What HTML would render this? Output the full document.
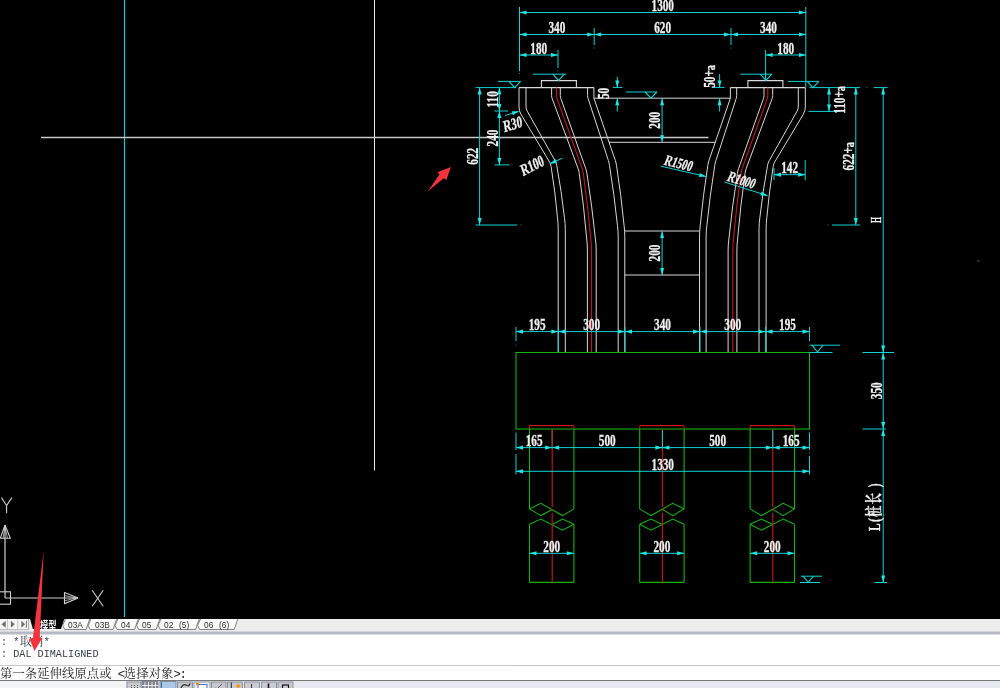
<!DOCTYPE html>
<html><head><meta charset="utf-8"><title>AutoCAD</title>
<style>
html,body{margin:0;padding:0;}
body{width:1000px;height:688px;overflow:hidden;position:relative;background:#000;font-family:"Liberation Sans","Noto Sans CJK SC",sans-serif;}
#draw{position:absolute;left:0;top:0;width:1000px;height:618px;background:#000;overflow:hidden;}
#tabs{will-change:transform;opacity:0.999;position:absolute;left:0;top:618px;width:1000px;height:14px;background:#eeeeee;}
#tabs .sep{position:absolute;left:0;top:13.2px;width:1000px;height:3.6px;background:linear-gradient(#e4e4e8,#a9adb9 50%,#ececf0);}
#hist{will-change:transform;opacity:0.999;position:absolute;left:0;top:634.5px;width:1000px;height:31px;background:#fff;}
#hist div{position:absolute;left:0.5px;white-space:pre;font-family:"Liberation Mono","Noto Serif CJK SC",monospace;font-size:11.4px;color:#3a3d44;line-height:14px;transform:scaleX(0.8918);transform-origin:0 0;}
#hist div b{font-weight:normal;display:inline-block;font-size:12px;line-height:14px;transform:scaleX(1.14);transform-origin:0 0;width:13.68px;vertical-align:top;position:relative;top:0.8px;}
#hsep{position:absolute;left:0;top:665.3px;width:1000px;height:1.4px;background:#c8c8c8;}
#cmd{will-change:transform;opacity:0.999;position:absolute;left:0;top:666.4px;width:1000px;height:13.6px;background:#fff;}
#cmd span{position:absolute;left:0;top:1px;letter-spacing:0.1px;white-space:pre;font-family:"Liberation Mono","Noto Serif CJK SC",serif;font-size:12.3px;line-height:16px;color:#222;}
#cmd i{display:inline-block;width:6.15px;font-style:normal;text-align:center;overflow:visible;}
#status{position:absolute;left:0;top:680px;width:1000px;height:8px;background:#e6e9f0;border-top:1px solid #777;box-sizing:border-box;}
.tab{position:absolute;top:1.0px;font-size:9.7px;line-height:12px;color:#2c2c2c;white-space:pre;font-family:"Liberation Sans","Noto Sans CJK SC",sans-serif;transform:scaleX(0.86);transform-origin:0 0;}
</style></head><body>
<div id="draw"><svg width="1000" height="618" viewBox="0 0 1000 618" style="position:absolute;left:0;top:0;will-change:transform;opacity:0.999"><line x1="124.5" y1="0" x2="124.5" y2="618" stroke="#12c8c8" stroke-width="1.25" />
<line x1="374.5" y1="0" x2="374.5" y2="470.5" stroke="#e8e8e8" stroke-width="1" />
<line x1="41" y1="137.4" x2="708.5" y2="137.4" stroke="#c8c8c8" stroke-width="1.5" />
<rect x="519.0" y="73.0" width="1" height="1" fill="#0c8c8c"/>
<rect x="593.7" y="47.5" width="1" height="1" fill="#0c8c8c"/>
<rect x="730.5" y="47.5" width="1" height="1" fill="#0c8c8c"/>
<rect x="557.5" y="70.5" width="1" height="1" fill="#0c8c8c"/>
<rect x="520.5" y="224.5" width="1" height="1" fill="#0c8c8c"/>
<rect x="511.5" y="164.4" width="1" height="1" fill="#0c8c8c"/>
<rect x="827.5" y="224.5" width="1" height="1" fill="#0c8c8c"/>
<rect x="866.5" y="87.1" width="1" height="1" fill="#0c8c8c"/>
<rect x="515.5" y="344.5" width="1" height="1" fill="#0c8c8c"/>
<rect x="809.0" y="452.5" width="1" height="1" fill="#0c8c8c"/>
<line x1="519.5" y1="7" x2="519.5" y2="71" stroke="#0fd6d6" stroke-width="1" />
<line x1="805.8" y1="7" x2="805.8" y2="87" stroke="#0fd6d6" stroke-width="1" />
<line x1="594.2" y1="28" x2="594.2" y2="45" stroke="#0fd6d6" stroke-width="1" />
<line x1="731" y1="28" x2="731" y2="45" stroke="#0fd6d6" stroke-width="1" />
<line x1="558" y1="50" x2="558" y2="68" stroke="#0fd6d6" stroke-width="1" />
<line x1="765.6" y1="50" x2="765.6" y2="80" stroke="#0fd6d6" stroke-width="1" />
<line x1="519.5" y1="12.5" x2="806" y2="12.5" stroke="#0fd6d6" stroke-width="1" />
<polygon points="519.5,12.5 526.5,10.4 526.5,14.6" fill="#1ee8e8"/>
<polygon points="806.0,12.5 799.0,14.6 799.0,10.4" fill="#1ee8e8"/>
<text transform="translate(662.75,11.2) scale(0.69,1)" text-anchor="middle" font-family="'Liberation Serif','Noto Serif CJK SC',serif" font-weight="bold" font-size="16.3" fill="#f2f2f2" stroke="#f2f2f2" stroke-width="0.3">1300</text>
<line x1="519.5" y1="34.5" x2="594.2" y2="34.5" stroke="#0fd6d6" stroke-width="1" />
<polygon points="519.5,34.5 526.5,32.5 526.5,36.5" fill="#1ee8e8"/>
<polygon points="594.2,34.5 587.2,36.5 587.2,32.5" fill="#1ee8e8"/>
<text transform="translate(556.85,33.2) scale(0.69,1)" text-anchor="middle" font-family="'Liberation Serif','Noto Serif CJK SC',serif" font-weight="bold" font-size="16.3" fill="#f2f2f2" stroke="#f2f2f2" stroke-width="0.3">340</text>
<line x1="594.2" y1="34.5" x2="731" y2="34.5" stroke="#0fd6d6" stroke-width="1" />
<polygon points="594.2,34.5 601.2,32.5 601.2,36.5" fill="#1ee8e8"/>
<polygon points="731.0,34.5 724.0,36.5 724.0,32.5" fill="#1ee8e8"/>
<text transform="translate(662.6,33.2) scale(0.69,1)" text-anchor="middle" font-family="'Liberation Serif','Noto Serif CJK SC',serif" font-weight="bold" font-size="16.3" fill="#f2f2f2" stroke="#f2f2f2" stroke-width="0.3">620</text>
<line x1="731" y1="34.5" x2="806" y2="34.5" stroke="#0fd6d6" stroke-width="1" />
<polygon points="731.0,34.5 738.0,32.5 738.0,36.5" fill="#1ee8e8"/>
<polygon points="806.0,34.5 799.0,36.5 799.0,32.5" fill="#1ee8e8"/>
<text transform="translate(768.5,33.2) scale(0.69,1)" text-anchor="middle" font-family="'Liberation Serif','Noto Serif CJK SC',serif" font-weight="bold" font-size="16.3" fill="#f2f2f2" stroke="#f2f2f2" stroke-width="0.3">340</text>
<line x1="519.5" y1="55" x2="558" y2="55" stroke="#0fd6d6" stroke-width="1" />
<polygon points="519.5,55.0 526.5,53.0 526.5,57.0" fill="#1ee8e8"/>
<polygon points="558.0,55.0 551.0,57.0 551.0,53.0" fill="#1ee8e8"/>
<text transform="translate(538.75,53.7) scale(0.69,1)" text-anchor="middle" font-family="'Liberation Serif','Noto Serif CJK SC',serif" font-weight="bold" font-size="16.3" fill="#f2f2f2" stroke="#f2f2f2" stroke-width="0.3">180</text>
<line x1="765.6" y1="55" x2="806" y2="55" stroke="#0fd6d6" stroke-width="1" />
<polygon points="765.6,55.0 772.6,53.0 772.6,57.0" fill="#1ee8e8"/>
<polygon points="806.0,55.0 799.0,57.0 799.0,53.0" fill="#1ee8e8"/>
<text transform="translate(785.8,53.7) scale(0.69,1)" text-anchor="middle" font-family="'Liberation Serif','Noto Serif CJK SC',serif" font-weight="bold" font-size="16.3" fill="#f2f2f2" stroke="#f2f2f2" stroke-width="0.3">180</text>
<path d="M519.00,87.6 L519.00,107.00 Q519.00,111.00 521.06,114.43 L549.51,161.86 Q550.80,164.00 551.11,166.48 Q555.18,191.80 557.46,217.35 Q558.20,223.30 558.20,229.30 L558.20,352.5" fill="none" stroke="#dadada" stroke-width="1"/>
<path d="M526.00,87.6 L526.00,106.50 Q526.00,109.00 527.23,111.18 L555.17,160.82 Q556.40,163.00 556.77,165.47 Q561.48,191.29 564.42,217.36 Q565.30,223.30 565.30,229.30 L565.30,352.5" fill="none" stroke="#dadada" stroke-width="1"/>
<path d="M551.60,87.6 L551.60,95.50 Q551.60,97.00 552.12,98.41 L578.13,168.66 Q579.00,171.00 579.28,173.48 Q583.90,206.16 586.72,239.04 Q587.40,245.00 587.40,251.00 L587.40,352.5" fill="none" stroke="#dadada" stroke-width="1"/>
<path d="M560.30,87.6 L560.30,95.50 Q560.30,97.00 560.80,98.41 L585.76,168.64 Q586.60,171.00 586.92,173.48 Q592.07,206.15 595.43,239.05 Q596.20,245.00 596.20,251.00 L596.20,352.5" fill="none" stroke="#dadada" stroke-width="1"/>
<path d="M587.60,87.6 L587.60,95.50 Q587.60,97.00 588.07,98.43 L608.42,160.62 Q609.20,163.00 609.53,165.48 Q614.36,195.25 617.42,225.25 Q618.20,231.20 618.20,237.20 L618.20,352.5" fill="none" stroke="#dadada" stroke-width="1"/>
<path d="M593.90,87.6 L593.90,97.20 Q593.90,98.20 594.23,99.15 L615.39,160.64 Q616.20,163.00 616.51,165.48 Q621.17,195.25 624.05,225.25 Q624.80,231.20 624.80,237.20 L624.80,352.5" fill="none" stroke="#dadada" stroke-width="1"/>
<polyline points="519,87.6 593.9,87.6" fill="none" stroke="#dadada" stroke-width="1.1" />
<polyline points="541.4,87.6 541.4,80.6 576.4,80.6 576.4,87.6" fill="none" stroke="#dadada" stroke-width="1.1" />
<path d="M556.50,87.6 L556.50,95.50 Q556.50,97.00 557.01,98.41 L582.16,168.65 Q583.00,171.00 583.29,173.48 Q587.94,206.16 590.82,239.04 Q591.50,245.00 591.50,251.00 L591.50,352.5" fill="none" stroke="#c81616" stroke-width="1.15"/>
<path d="M805.30,87.6 L805.30,107.00 Q805.30,111.00 803.24,114.43 L774.79,161.86 Q773.50,164.00 773.19,166.48 Q769.12,191.80 766.84,217.35 Q766.10,223.30 766.10,229.30 L766.10,352.5" fill="none" stroke="#dadada" stroke-width="1"/>
<path d="M798.30,87.6 L798.30,106.50 Q798.30,109.00 797.07,111.18 L769.13,160.82 Q767.90,163.00 767.53,165.47 Q762.82,191.29 759.88,217.36 Q759.00,223.30 759.00,229.30 L759.00,352.5" fill="none" stroke="#dadada" stroke-width="1"/>
<path d="M772.70,87.6 L772.70,95.50 Q772.70,97.00 772.18,98.41 L746.17,168.66 Q745.30,171.00 745.02,173.48 Q740.40,206.16 737.58,239.04 Q736.90,245.00 736.90,251.00 L736.90,352.5" fill="none" stroke="#dadada" stroke-width="1"/>
<path d="M764.00,87.6 L764.00,95.50 Q764.00,97.00 763.50,98.41 L738.54,168.64 Q737.70,171.00 737.38,173.48 Q732.23,206.15 728.87,239.05 Q728.10,245.00 728.10,251.00 L728.10,352.5" fill="none" stroke="#dadada" stroke-width="1"/>
<path d="M736.70,87.6 L736.70,95.50 Q736.70,97.00 736.23,98.43 L715.88,160.62 Q715.10,163.00 714.77,165.48 Q709.94,195.25 706.88,225.25 Q706.10,231.20 706.10,237.20 L706.10,352.5" fill="none" stroke="#dadada" stroke-width="1"/>
<path d="M730.40,87.6 L730.40,97.20 Q730.40,98.20 730.07,99.15 L708.91,160.64 Q708.10,163.00 707.79,165.48 Q703.13,195.25 700.25,225.25 Q699.50,231.20 699.50,237.20 L699.50,352.5" fill="none" stroke="#dadada" stroke-width="1"/>
<polyline points="805.3,87.6 730.4,87.6" fill="none" stroke="#dadada" stroke-width="1.1" />
<polyline points="782.9,87.6 782.9,80.6 747.9,80.6 747.9,87.6" fill="none" stroke="#dadada" stroke-width="1.1" />
<path d="M767.80,87.6 L767.80,95.50 Q767.80,97.00 767.29,98.41 L742.14,168.65 Q741.30,171.00 741.01,173.48 Q736.36,206.16 733.48,239.04 Q732.80,245.00 732.80,251.00 L732.80,352.5" fill="none" stroke="#c81616" stroke-width="1.15"/>
<line x1="593.9" y1="98.2" x2="730.7" y2="98.2" stroke="#dadada" stroke-width="1" />
<line x1="608.9" y1="142.3" x2="715.7" y2="142.3" stroke="#dadada" stroke-width="1" />
<line x1="624.8" y1="231" x2="699.6" y2="231" stroke="#dadada" stroke-width="1" />
<line x1="624.8" y1="275" x2="699.6" y2="275" stroke="#dadada" stroke-width="1" />
<line x1="498" y1="81.39999999999999" x2="520.5" y2="81.39999999999999" stroke="#0fd6d6" stroke-width="1" />
<polyline points="508.99999999999994,81.39999999999999 514.8,87.6 520.5999999999999,81.39999999999999" fill="none" stroke="#0fd6d6" stroke-width="1.1" />
<line x1="533" y1="74.2" x2="566" y2="74.2" stroke="#0fd6d6" stroke-width="1" />
<polyline points="552.8000000000001,74.2 558.6,80.4 564.4,74.2" fill="none" stroke="#0fd6d6" stroke-width="1.1" />
<line x1="626" y1="92.0" x2="657" y2="92.0" stroke="#0fd6d6" stroke-width="1" />
<polyline points="645.2,92.0 651,98.2 656.8,92.0" fill="none" stroke="#0fd6d6" stroke-width="1.1" />
<line x1="740.3" y1="74.2" x2="772.1" y2="74.2" stroke="#0fd6d6" stroke-width="1" />
<polyline points="760.2,74.2 766,80.4 771.8,74.2" fill="none" stroke="#0fd6d6" stroke-width="1.1" />
<line x1="788" y1="81.39999999999999" x2="819" y2="81.39999999999999" stroke="#0fd6d6" stroke-width="1" />
<polyline points="807.2,81.39999999999999 813,87.6 818.8,81.39999999999999" fill="none" stroke="#0fd6d6" stroke-width="1.1" />
<line x1="765.6" y1="72" x2="765.6" y2="80" stroke="#0fd6d6" stroke-width="1" />
<line x1="475.5" y1="87.6" x2="516" y2="87.6" stroke="#0fd6d6" stroke-width="1" />
<line x1="475.6" y1="225" x2="517" y2="225" stroke="#0fd6d6" stroke-width="1" />
<line x1="479.6" y1="87.6" x2="479.6" y2="225" stroke="#0fd6d6" stroke-width="1" />
<polygon points="479.6,87.6 481.7,94.6 477.6,94.6" fill="#1ee8e8"/>
<polygon points="479.6,225.0 477.6,218.0 481.7,218.0" fill="#1ee8e8"/>
<text transform="translate(478.1,156.3) rotate(-90) scale(0.69,1)" text-anchor="middle" font-family="'Liberation Serif','Noto Serif CJK SC',serif" font-weight="bold" font-size="16.3" fill="#f2f2f2" stroke="#f2f2f2" stroke-width="0.3">622</text>
<line x1="494.5" y1="111" x2="508" y2="111" stroke="#0fd6d6" stroke-width="1" />
<line x1="494.5" y1="164.9" x2="509.5" y2="164.9" stroke="#0fd6d6" stroke-width="1" />
<line x1="499.4" y1="87.6" x2="499.4" y2="111" stroke="#0fd6d6" stroke-width="1" />
<polygon points="499.4,87.6 501.4,94.6 497.3,94.6" fill="#1ee8e8"/>
<polygon points="499.4,111.0 497.3,104.0 501.4,104.0" fill="#1ee8e8"/>
<text transform="translate(497.9,99.3) rotate(-90) scale(0.69,1)" text-anchor="middle" font-family="'Liberation Serif','Noto Serif CJK SC',serif" font-weight="bold" font-size="16.3" fill="#f2f2f2" stroke="#f2f2f2" stroke-width="0.3">110</text>
<line x1="499.4" y1="111" x2="499.4" y2="164.9" stroke="#0fd6d6" stroke-width="1" />
<polygon points="499.4,111.0 501.4,118.0 497.3,118.0" fill="#1ee8e8"/>
<polygon points="499.4,164.9 497.3,157.9 501.4,157.9" fill="#1ee8e8"/>
<text transform="translate(497.9,137.95) rotate(-90) scale(0.69,1)" text-anchor="middle" font-family="'Liberation Serif','Noto Serif CJK SC',serif" font-weight="bold" font-size="16.3" fill="#f2f2f2" stroke="#f2f2f2" stroke-width="0.3">240</text>
<line x1="613" y1="87.4" x2="622.5" y2="87.4" stroke="#0fd6d6" stroke-width="1" />
<line x1="617.3" y1="77" x2="617.3" y2="87.4" stroke="#0fd6d6" stroke-width="1" />
<polygon points="617.3,87.4 615.2,80.4 619.3,80.4" fill="#1ee8e8"/>
<line x1="617.3" y1="98.2" x2="617.3" y2="111.5" stroke="#0fd6d6" stroke-width="1" />
<polygon points="617.3,98.2 619.3,105.2 615.2,105.2" fill="#1ee8e8"/>
<text transform="translate(609.3,93.4) rotate(-90) scale(0.69,1)" text-anchor="middle" font-family="'Liberation Serif','Noto Serif CJK SC',serif" font-weight="bold" font-size="16.3" fill="#f2f2f2" stroke="#f2f2f2" stroke-width="0.3">50</text>
<line x1="712" y1="87.4" x2="724.5" y2="87.4" stroke="#0fd6d6" stroke-width="1" />
<line x1="719.6" y1="74" x2="719.6" y2="87.4" stroke="#0fd6d6" stroke-width="1" />
<polygon points="719.6,87.4 717.6,80.4 721.6,80.4" fill="#1ee8e8"/>
<line x1="719.6" y1="98.2" x2="719.6" y2="111.5" stroke="#0fd6d6" stroke-width="1" />
<polygon points="719.6,98.2 721.6,105.2 717.6,105.2" fill="#1ee8e8"/>
<text transform="translate(714.5,76.5) rotate(-90) scale(0.69,1)" text-anchor="middle" font-family="'Liberation Serif','Noto Serif CJK SC',serif" font-weight="bold" font-size="16.3" fill="#f2f2f2" stroke="#f2f2f2" stroke-width="0.3">50+<tspan font-size="14.5">a</tspan></text>
<line x1="662.1" y1="98.2" x2="662.1" y2="142.3" stroke="#0fd6d6" stroke-width="1" />
<polygon points="662.1,98.2 664.1,105.2 660.1,105.2" fill="#1ee8e8"/>
<polygon points="662.1,142.3 660.1,135.3 664.1,135.3" fill="#1ee8e8"/>
<text transform="translate(659.6,120.25) rotate(-90) scale(0.69,1)" text-anchor="middle" font-family="'Liberation Serif','Noto Serif CJK SC',serif" font-weight="bold" font-size="16.3" fill="#f2f2f2" stroke="#f2f2f2" stroke-width="0.3">200</text>
<line x1="662.1" y1="231" x2="662.1" y2="275" stroke="#0fd6d6" stroke-width="1" />
<polygon points="662.1,231.0 664.1,238.0 660.1,238.0" fill="#1ee8e8"/>
<polygon points="662.1,275.0 660.1,268.0 664.1,268.0" fill="#1ee8e8"/>
<text transform="translate(659.8,253.0) rotate(-90) scale(0.69,1)" text-anchor="middle" font-family="'Liberation Serif','Noto Serif CJK SC',serif" font-weight="bold" font-size="16.3" fill="#f2f2f2" stroke="#f2f2f2" stroke-width="0.3">200</text>
<line x1="809.5" y1="87.6" x2="860" y2="87.6" stroke="#0fd6d6" stroke-width="1" />
<line x1="873.8" y1="87.6" x2="887.5" y2="87.6" stroke="#0fd6d6" stroke-width="1" />
<line x1="808.5" y1="111.4" x2="840" y2="111.4" stroke="#0fd6d6" stroke-width="1" />
<line x1="829" y1="87.6" x2="829" y2="111.4" stroke="#0fd6d6" stroke-width="1" />
<polygon points="829.0,87.6 831.0,94.6 827.0,94.6" fill="#1ee8e8"/>
<polygon points="829.0,111.4 827.0,104.4 831.0,104.4" fill="#1ee8e8"/>
<text transform="translate(845.3,100) rotate(-90) scale(0.69,1)" text-anchor="middle" font-family="'Liberation Serif','Noto Serif CJK SC',serif" font-weight="bold" font-size="16.3" fill="#f2f2f2" stroke="#f2f2f2" stroke-width="0.3">110+<tspan font-size="14.5">a</tspan></text>
<line x1="832" y1="225" x2="860" y2="225" stroke="#0fd6d6" stroke-width="1" />
<line x1="855.8" y1="87.6" x2="855.8" y2="225" stroke="#0fd6d6" stroke-width="1" />
<polygon points="855.8,87.6 857.8,94.6 853.8,94.6" fill="#1ee8e8"/>
<polygon points="855.8,225.0 853.8,218.0 857.8,218.0" fill="#1ee8e8"/>
<text transform="translate(854.3,156.3) rotate(-90) scale(0.69,1)" text-anchor="middle" font-family="'Liberation Serif','Noto Serif CJK SC',serif" font-weight="bold" font-size="16.3" fill="#f2f2f2" stroke="#f2f2f2" stroke-width="0.3">622+<tspan font-size="14.5">a</tspan></text>
<line x1="883.2" y1="87.6" x2="883.2" y2="352.5" stroke="#0fd6d6" stroke-width="1" />
<polygon points="883.2,87.6 885.2,94.6 881.2,94.6" fill="#1ee8e8"/>
<polygon points="883.2,352.5 881.2,345.5 885.2,345.5" fill="#1ee8e8"/>
<text transform="translate(881.3,220) rotate(-90) scale(0.5,1)" text-anchor="middle" font-family="'Liberation Serif','Noto Serif CJK SC',serif" font-weight="bold" font-size="15.5" fill="#f2f2f2" stroke="#f2f2f2" stroke-width="0.3">H</text>
<line x1="883.2" y1="352.5" x2="883.2" y2="429" stroke="#0fd6d6" stroke-width="1" />
<polygon points="883.2,352.5 885.2,359.5 881.2,359.5" fill="#1ee8e8"/>
<polygon points="883.2,429.0 881.2,422.0 885.2,422.0" fill="#1ee8e8"/>
<text transform="translate(881.7,390.75) rotate(-90) scale(0.69,1)" text-anchor="middle" font-family="'Liberation Serif','Noto Serif CJK SC',serif" font-weight="bold" font-size="16.3" fill="#f2f2f2" stroke="#f2f2f2" stroke-width="0.3">350</text>
<line x1="883.2" y1="429" x2="883.2" y2="582.5" stroke="#0fd6d6" stroke-width="1" />
<polygon points="883.2,429.0 885.2,436.0 881.2,436.0" fill="#1ee8e8"/>
<polygon points="883.2,582.5 881.2,575.5 885.2,575.5" fill="#1ee8e8"/>
<text letter-spacing="2" transform="translate(880.4,506.5) rotate(-90) scale(0.69,1)" text-anchor="middle" font-family="'Liberation Serif','Noto Serif CJK SC',serif" font-weight="bold" font-size="16.5" fill="#f2f2f2" stroke="#f2f2f2" stroke-width="0.3">L(桩长 )</text>
<line x1="862.5" y1="352.5" x2="894" y2="352.5" stroke="#0fd6d6" stroke-width="1" />
<line x1="862.5" y1="429" x2="886" y2="429" stroke="#0fd6d6" stroke-width="1" />
<line x1="874.5" y1="582.5" x2="887" y2="582.5" stroke="#0fd6d6" stroke-width="1" />
<line x1="774" y1="168" x2="774" y2="180" stroke="#0fd6d6" stroke-width="1" />
<line x1="805.2" y1="160" x2="805.2" y2="180" stroke="#0fd6d6" stroke-width="1" />
<line x1="774" y1="174.7" x2="805.2" y2="174.7" stroke="#0fd6d6" stroke-width="1" />
<polygon points="774.0,174.7 781.0,172.6 781.0,176.8" fill="#1ee8e8"/>
<polygon points="805.2,174.7 798.2,176.8 798.2,172.6" fill="#1ee8e8"/>
<text transform="translate(789.6,173.39999999999998) scale(0.69,1)" text-anchor="middle" font-family="'Liberation Serif','Noto Serif CJK SC',serif" font-weight="bold" font-size="16.3" fill="#f2f2f2" stroke="#f2f2f2" stroke-width="0.3">142</text>
<line x1="505" y1="115.5" x2="518.5" y2="111.5" stroke="#0fd6d6" stroke-width="1" />
<polygon points="519.0,111.3 512.9,115.3 511.7,111.3" fill="#1ee8e8"/>
<text transform="translate(513.5,129.5) rotate(-17) skewX(-8) scale(0.69,1)" text-anchor="middle" font-family="'Liberation Serif','Noto Serif CJK SC',serif" font-weight="bold" font-size="16.3" fill="#f2f2f2" stroke="#f2f2f2" stroke-width="0.3">R30</text>
<line x1="549.8" y1="163.8" x2="562.4" y2="158.2" stroke="#0fd6d6" stroke-width="1" />
<polygon points="549.8,163.8 555.4,159.1 557.0,162.9" fill="#1ee8e8"/>
<text transform="translate(534,170.5) rotate(-27) skewX(-8) scale(0.69,1)" text-anchor="middle" font-family="'Liberation Serif','Noto Serif CJK SC',serif" font-weight="bold" font-size="16.3" fill="#f2f2f2" stroke="#f2f2f2" stroke-width="0.3">R100</text>
<line x1="660.7" y1="166.1" x2="706.2" y2="176.6" stroke="#0fd6d6" stroke-width="1" />
<polygon points="706.2,176.6 698.9,177.0 699.8,173.0" fill="#1ee8e8"/>
<text transform="translate(677,167.8) rotate(14) skewX(-8) scale(0.69,1)" text-anchor="middle" font-family="'Liberation Serif','Noto Serif CJK SC',serif" font-weight="bold" font-size="15" fill="#f2f2f2" stroke="#f2f2f2" stroke-width="0.3">R1500</text>
<line x1="724.3" y1="182" x2="767.7" y2="195.7" stroke="#0fd6d6" stroke-width="1" />
<polygon points="767.7,195.7 760.4,195.6 761.6,191.6" fill="#1ee8e8"/>
<text transform="translate(739.8,184.6) rotate(17) skewX(-8) scale(0.69,1)" text-anchor="middle" font-family="'Liberation Serif','Noto Serif CJK SC',serif" font-weight="bold" font-size="15" fill="#f2f2f2" stroke="#f2f2f2" stroke-width="0.3">R1000</text>
<line x1="516" y1="327" x2="516" y2="341" stroke="#0fd6d6" stroke-width="1" />
<line x1="558.3" y1="327" x2="558.3" y2="352" stroke="#0fd6d6" stroke-width="1" />
<line x1="625" y1="327" x2="625" y2="352" stroke="#0fd6d6" stroke-width="1" />
<line x1="700" y1="327" x2="700" y2="352" stroke="#0fd6d6" stroke-width="1" />
<line x1="765.6" y1="327" x2="765.6" y2="352" stroke="#0fd6d6" stroke-width="1" />
<line x1="809.5" y1="327" x2="809.5" y2="341" stroke="#0fd6d6" stroke-width="1" />
<line x1="516" y1="331.6" x2="558.3" y2="331.6" stroke="#0fd6d6" stroke-width="1" />
<polygon points="516.0,331.6 523.0,329.6 523.0,333.7" fill="#1ee8e8"/>
<polygon points="558.3,331.6 551.3,333.7 551.3,329.6" fill="#1ee8e8"/>
<text transform="translate(537.15,330.3) scale(0.69,1)" text-anchor="middle" font-family="'Liberation Serif','Noto Serif CJK SC',serif" font-weight="bold" font-size="16.3" fill="#f2f2f2" stroke="#f2f2f2" stroke-width="0.3">195</text>
<line x1="558.3" y1="331.6" x2="625" y2="331.6" stroke="#0fd6d6" stroke-width="1" />
<polygon points="558.3,331.6 565.3,329.6 565.3,333.7" fill="#1ee8e8"/>
<polygon points="625.0,331.6 618.0,333.7 618.0,329.6" fill="#1ee8e8"/>
<text transform="translate(591.65,330.3) scale(0.69,1)" text-anchor="middle" font-family="'Liberation Serif','Noto Serif CJK SC',serif" font-weight="bold" font-size="16.3" fill="#f2f2f2" stroke="#f2f2f2" stroke-width="0.3">300</text>
<line x1="625" y1="331.6" x2="700" y2="331.6" stroke="#0fd6d6" stroke-width="1" />
<polygon points="625.0,331.6 632.0,329.6 632.0,333.7" fill="#1ee8e8"/>
<polygon points="700.0,331.6 693.0,333.7 693.0,329.6" fill="#1ee8e8"/>
<text transform="translate(662.5,330.3) scale(0.69,1)" text-anchor="middle" font-family="'Liberation Serif','Noto Serif CJK SC',serif" font-weight="bold" font-size="16.3" fill="#f2f2f2" stroke="#f2f2f2" stroke-width="0.3">340</text>
<line x1="700" y1="331.6" x2="765.6" y2="331.6" stroke="#0fd6d6" stroke-width="1" />
<polygon points="700.0,331.6 707.0,329.6 707.0,333.7" fill="#1ee8e8"/>
<polygon points="765.6,331.6 758.6,333.7 758.6,329.6" fill="#1ee8e8"/>
<text transform="translate(732.8,330.3) scale(0.69,1)" text-anchor="middle" font-family="'Liberation Serif','Noto Serif CJK SC',serif" font-weight="bold" font-size="16.3" fill="#f2f2f2" stroke="#f2f2f2" stroke-width="0.3">300</text>
<line x1="765.6" y1="331.6" x2="809.5" y2="331.6" stroke="#0fd6d6" stroke-width="1" />
<polygon points="765.6,331.6 772.6,329.6 772.6,333.7" fill="#1ee8e8"/>
<polygon points="809.5,331.6 802.5,333.7 802.5,329.6" fill="#1ee8e8"/>
<text transform="translate(787.55,330.3) scale(0.69,1)" text-anchor="middle" font-family="'Liberation Serif','Noto Serif CJK SC',serif" font-weight="bold" font-size="16.3" fill="#f2f2f2" stroke="#f2f2f2" stroke-width="0.3">195</text>
<rect x="516" y="352.5" width="293.5" height="76.5" fill="none" stroke="#13b613" stroke-width="1.1"/>
<line x1="809.5" y1="345.2" x2="840" y2="345.2" stroke="#0fd6d6" stroke-width="1" />
<polyline points="812.0,345.2 817.5,352 823.0,345.2" fill="none" stroke="#0fd6d6" stroke-width="1.1" />
<line x1="809.5" y1="352.5" x2="832.5" y2="352.5" stroke="#0fd6d6" stroke-width="1" />
<line x1="529.5" y1="425.6" x2="573.9000000000001" y2="425.6" stroke="#c81616" stroke-width="1.1" />
<line x1="529.5" y1="425.6" x2="529.5" y2="429" stroke="#c81616" stroke-width="1" />
<line x1="573.9000000000001" y1="425.6" x2="573.9000000000001" y2="429" stroke="#c81616" stroke-width="1" />
<line x1="529.5" y1="429" x2="529.5" y2="508.9" stroke="#13b613" stroke-width="1.1" />
<line x1="573.9000000000001" y1="429" x2="573.9000000000001" y2="508.9" stroke="#13b613" stroke-width="1.1" />
<line x1="529.5" y1="524.3" x2="529.5" y2="582.4" stroke="#13b613" stroke-width="1.1" />
<line x1="573.9000000000001" y1="524.3" x2="573.9000000000001" y2="582.4" stroke="#13b613" stroke-width="1.1" />
<line x1="529.5" y1="582.4" x2="573.9000000000001" y2="582.4" stroke="#13b613" stroke-width="1.1" />
<polyline points="529.5,508.9 540.8,503.3 562.6000000000001,515.6 573.9000000000001,508.9" fill="none" stroke="#13b613" stroke-width="1.1" />
<polyline points="529.5,508.9 540.8,515.6 552.2,509.4" fill="none" stroke="#13b613" stroke-width="1.1" />
<polyline points="529.5,524.3 540.8,519 562.6000000000001,530.2 573.9000000000001,524.3" fill="none" stroke="#13b613" stroke-width="1.1" />
<polyline points="552.2,524.6 562.6000000000001,519 573.9000000000001,524.3" fill="none" stroke="#13b613" stroke-width="1.1" />
<line x1="552.2" y1="430" x2="552.2" y2="449" stroke="#0fd6d6" stroke-width="1" />
<line x1="552.2" y1="429" x2="552.2" y2="582.4" stroke="#c81616" stroke-width="1.15" stroke-dasharray="78 2 2 2"/>
<line x1="529.5" y1="553.3" x2="573.9000000000001" y2="553.3" stroke="#0fd6d6" stroke-width="1" />
<polygon points="529.5,553.3 536.5,551.2 536.5,555.3" fill="#1ee8e8"/>
<polygon points="573.9,553.3 566.9,555.3 566.9,551.2" fill="#1ee8e8"/>
<text transform="translate(551.7,552.0) scale(0.69,1)" text-anchor="middle" font-family="'Liberation Serif','Noto Serif CJK SC',serif" font-weight="bold" font-size="16.3" fill="#f2f2f2" stroke="#f2f2f2" stroke-width="0.3">200</text>
<line x1="639.6999999999999" y1="425.6" x2="684.1" y2="425.6" stroke="#c81616" stroke-width="1.1" />
<line x1="639.6999999999999" y1="425.6" x2="639.6999999999999" y2="429" stroke="#c81616" stroke-width="1" />
<line x1="684.1" y1="425.6" x2="684.1" y2="429" stroke="#c81616" stroke-width="1" />
<line x1="639.6999999999999" y1="429" x2="639.6999999999999" y2="508.9" stroke="#13b613" stroke-width="1.1" />
<line x1="684.1" y1="429" x2="684.1" y2="508.9" stroke="#13b613" stroke-width="1.1" />
<line x1="639.6999999999999" y1="524.3" x2="639.6999999999999" y2="582.4" stroke="#13b613" stroke-width="1.1" />
<line x1="684.1" y1="524.3" x2="684.1" y2="582.4" stroke="#13b613" stroke-width="1.1" />
<line x1="639.6999999999999" y1="582.4" x2="684.1" y2="582.4" stroke="#13b613" stroke-width="1.1" />
<polyline points="639.6999999999999,508.9 650.9999999999999,515.6 672.8000000000001,503.3 684.1,508.9" fill="none" stroke="#13b613" stroke-width="1.1" />
<polyline points="662.4,509.4 672.8000000000001,515.6 684.1,508.9" fill="none" stroke="#13b613" stroke-width="1.1" />
<polyline points="639.6999999999999,524.3 650.9999999999999,530.2 672.8000000000001,519 684.1,524.3" fill="none" stroke="#13b613" stroke-width="1.1" />
<polyline points="639.6999999999999,524.3 650.9999999999999,519 662.4,524.6" fill="none" stroke="#13b613" stroke-width="1.1" />
<line x1="662.4" y1="429" x2="662.4" y2="582.4" stroke="#c81616" stroke-width="1.15" stroke-dasharray="78 2 2 2"/>
<line x1="662.4" y1="430" x2="662.4" y2="449" stroke="#0fd6d6" stroke-width="1" />
<line x1="639.6999999999999" y1="553.3" x2="684.1" y2="553.3" stroke="#0fd6d6" stroke-width="1" />
<polygon points="639.7,553.3 646.7,551.2 646.7,555.3" fill="#1ee8e8"/>
<polygon points="684.1,553.3 677.1,555.3 677.1,551.2" fill="#1ee8e8"/>
<text transform="translate(661.9,552.0) scale(0.69,1)" text-anchor="middle" font-family="'Liberation Serif','Noto Serif CJK SC',serif" font-weight="bold" font-size="16.3" fill="#f2f2f2" stroke="#f2f2f2" stroke-width="0.3">200</text>
<line x1="750.0999999999999" y1="425.6" x2="794.5" y2="425.6" stroke="#c81616" stroke-width="1.1" />
<line x1="750.0999999999999" y1="425.6" x2="750.0999999999999" y2="429" stroke="#c81616" stroke-width="1" />
<line x1="794.5" y1="425.6" x2="794.5" y2="429" stroke="#c81616" stroke-width="1" />
<line x1="750.0999999999999" y1="429" x2="750.0999999999999" y2="508.9" stroke="#13b613" stroke-width="1.1" />
<line x1="794.5" y1="429" x2="794.5" y2="508.9" stroke="#13b613" stroke-width="1.1" />
<line x1="750.0999999999999" y1="524.3" x2="750.0999999999999" y2="582.4" stroke="#13b613" stroke-width="1.1" />
<line x1="794.5" y1="524.3" x2="794.5" y2="582.4" stroke="#13b613" stroke-width="1.1" />
<line x1="750.0999999999999" y1="582.4" x2="794.5" y2="582.4" stroke="#13b613" stroke-width="1.1" />
<polyline points="750.0999999999999,508.9 761.3999999999999,515.6 783.2,503.3 794.5,508.9" fill="none" stroke="#13b613" stroke-width="1.1" />
<polyline points="772.8,509.4 783.2,515.6 794.5,508.9" fill="none" stroke="#13b613" stroke-width="1.1" />
<polyline points="750.0999999999999,524.3 761.3999999999999,530.2 783.2,519 794.5,524.3" fill="none" stroke="#13b613" stroke-width="1.1" />
<polyline points="750.0999999999999,524.3 761.3999999999999,519 772.8,524.6" fill="none" stroke="#13b613" stroke-width="1.1" />
<line x1="772.8" y1="429" x2="772.8" y2="582.4" stroke="#c81616" stroke-width="1.15" stroke-dasharray="78 2 2 2"/>
<line x1="772.8" y1="430" x2="772.8" y2="449" stroke="#0fd6d6" stroke-width="1" />
<line x1="750.0999999999999" y1="553.3" x2="794.5" y2="553.3" stroke="#0fd6d6" stroke-width="1" />
<polygon points="750.1,553.3 757.1,551.2 757.1,555.3" fill="#1ee8e8"/>
<polygon points="794.5,553.3 787.5,555.3 787.5,551.2" fill="#1ee8e8"/>
<text transform="translate(772.3,552.0) scale(0.69,1)" text-anchor="middle" font-family="'Liberation Serif','Noto Serif CJK SC',serif" font-weight="bold" font-size="16.3" fill="#f2f2f2" stroke="#f2f2f2" stroke-width="0.3">200</text>
<line x1="516" y1="432.5" x2="516" y2="450" stroke="#0fd6d6" stroke-width="1" />
<line x1="516" y1="454" x2="516" y2="474.5" stroke="#0fd6d6" stroke-width="1" />
<line x1="809.5" y1="432.5" x2="809.5" y2="450" stroke="#0fd6d6" stroke-width="1" />
<line x1="809.5" y1="456" x2="809.5" y2="474.5" stroke="#0fd6d6" stroke-width="1" />
<line x1="516" y1="447.6" x2="552.2" y2="447.6" stroke="#0fd6d6" stroke-width="1" />
<polygon points="516.0,447.6 523.0,445.6 523.0,449.7" fill="#1ee8e8"/>
<polygon points="552.2,447.6 545.2,449.7 545.2,445.6" fill="#1ee8e8"/>
<text transform="translate(534.1,446.3) scale(0.69,1)" text-anchor="middle" font-family="'Liberation Serif','Noto Serif CJK SC',serif" font-weight="bold" font-size="16.3" fill="#f2f2f2" stroke="#f2f2f2" stroke-width="0.3">165</text>
<line x1="552.2" y1="447.6" x2="662.4" y2="447.6" stroke="#0fd6d6" stroke-width="1" />
<polygon points="552.2,447.6 559.2,445.6 559.2,449.7" fill="#1ee8e8"/>
<polygon points="662.4,447.6 655.4,449.7 655.4,445.6" fill="#1ee8e8"/>
<text transform="translate(607.3,446.3) scale(0.69,1)" text-anchor="middle" font-family="'Liberation Serif','Noto Serif CJK SC',serif" font-weight="bold" font-size="16.3" fill="#f2f2f2" stroke="#f2f2f2" stroke-width="0.3">500</text>
<line x1="662.4" y1="447.6" x2="772.8" y2="447.6" stroke="#0fd6d6" stroke-width="1" />
<polygon points="662.4,447.6 669.4,445.6 669.4,449.7" fill="#1ee8e8"/>
<polygon points="772.8,447.6 765.8,449.7 765.8,445.6" fill="#1ee8e8"/>
<text transform="translate(717.5999999999999,446.3) scale(0.69,1)" text-anchor="middle" font-family="'Liberation Serif','Noto Serif CJK SC',serif" font-weight="bold" font-size="16.3" fill="#f2f2f2" stroke="#f2f2f2" stroke-width="0.3">500</text>
<line x1="772.8" y1="447.6" x2="809.5" y2="447.6" stroke="#0fd6d6" stroke-width="1" />
<polygon points="772.8,447.6 779.8,445.6 779.8,449.7" fill="#1ee8e8"/>
<polygon points="809.5,447.6 802.5,449.7 802.5,445.6" fill="#1ee8e8"/>
<text transform="translate(791.15,446.3) scale(0.69,1)" text-anchor="middle" font-family="'Liberation Serif','Noto Serif CJK SC',serif" font-weight="bold" font-size="16.3" fill="#f2f2f2" stroke="#f2f2f2" stroke-width="0.3">165</text>
<line x1="516" y1="471.3" x2="809.5" y2="471.3" stroke="#0fd6d6" stroke-width="1" />
<polygon points="516.0,471.3 523.0,469.2 523.0,473.4" fill="#1ee8e8"/>
<polygon points="809.5,471.3 802.5,473.4 802.5,469.2" fill="#1ee8e8"/>
<text transform="translate(662.75,470.0) scale(0.69,1)" text-anchor="middle" font-family="'Liberation Serif','Noto Serif CJK SC',serif" font-weight="bold" font-size="16.3" fill="#f2f2f2" stroke="#f2f2f2" stroke-width="0.3">1330</text>
<line x1="801" y1="576.2" x2="822" y2="576.2" stroke="#0fd6d6" stroke-width="1" />
<polyline points="802.8000000000001,576.2 808.2,582 813.6,576.2" fill="none" stroke="#0fd6d6" stroke-width="1.1" />
<line x1="800" y1="582.5" x2="820" y2="582.5" stroke="#0fd6d6" stroke-width="1" />
<polyline points="5,598 5,525" fill="none" stroke="#d0d0d0" stroke-width="1.2" />
<polyline points="5,598 78,598" fill="none" stroke="#d0d0d0" stroke-width="1.2" />
<polyline points="5,525 0.3,538.2 10.3,538.2 5,525" fill="none" stroke="#d0d0d0" stroke-width="1.1" />
<polyline points="3,538.2 5,527 7.5,538.2" fill="none" stroke="#d0d0d0" stroke-width="0.8" />
<polyline points="78.2,598 64.5,592.6 64.5,603.6 78.2,598" fill="none" stroke="#d0d0d0" stroke-width="1.1" />
<polyline points="64.5,595.5 76,598 64.5,600.8" fill="none" stroke="#d0d0d0" stroke-width="0.8" />
<rect x="-1" y="591.8" width="11.5" height="12.4" fill="none" stroke="#d0d0d0" stroke-width="1.1"/>
<polyline points="1.4,497.6 6.6,505.5 11.9,497.6" fill="none" stroke="#d0d0d0" stroke-width="1.1" />
<line x1="6.6" y1="505.5" x2="6.6" y2="513.2" stroke="#d0d0d0" stroke-width="1.1" />
<line x1="92.2" y1="590.2" x2="103.2" y2="606.2" stroke="#d0d0d0" stroke-width="1.1" />
<line x1="103.2" y1="590.2" x2="92.2" y2="606.2" stroke="#d0d0d0" stroke-width="1.1" />
<polygon points="427.9,191.3 439.5,174.6 437.3,172.3 450.9,166.9 446.4,180 443.8,178.2" fill="#f5333c"/>
<circle cx="978.3" cy="261" r="1.2" fill="#1a3a44"/></svg></div>
<div style="position:absolute;left:0;top:617px;width:1000px;height:1.6px;background:#000;z-index:3"></div>
<div id="tabs">
<svg width="1000" height="17" viewBox="0 618 1000 17" style="position:absolute;left:0;top:0">
<rect x="0" y="618" width="28.3" height="11.6" fill="#f6f6f6"/>
<line x1="0" y1="629.6" x2="28.8" y2="629.6" stroke="#b8b8b8"/>
<polygon points="5.7,620.7 5.7,627.7 1.5,624.2" fill="#6e6e6e"/>
<polygon points="10.9,620.7 10.9,627.7 14.7,624.2" fill="#6e6e6e"/>
<polygon points="21.4,620.7 21.4,627.7 25.1,624.2" fill="#6e6e6e"/><rect x="25.9" y="620.7" width="1" height="7" fill="#6e6e6e"/>
<line x1="7.6" y1="618" x2="7.6" y2="629.6" stroke="#c4c4c4"/><line x1="17.8" y1="618" x2="17.8" y2="629.6" stroke="#c4c4c4"/><line x1="28.5" y1="618" x2="28.5" y2="629.6" stroke="#b4b4b4"/>
<g stroke="#666" stroke-width="0.8" fill="#fbfbfb" stroke-linejoin="round">
<polyline points="200.8,618.4 197.6,625.3 199.7,629.5 234.2,629.5 238,618.4" />
<polyline points="161.3,618.4 158.1,625.3 160.2,629.5 195.6,629.5 199.4,618.4" />
<polyline points="139.8,618.4 136.6,625.3 138.7,629.5 156.1,629.5 159.9,618.4" />
<polyline points="118.2,618.4 115.0,625.3 117.1,629.5 134.6,629.5 138.4,618.4" />
<polyline points="91.3,618.4 88.1,625.3 90.2,629.5 113.0,629.5 116.8,618.4" />
<polyline points="65.8,618.4 62.6,625.3 64.7,629.5 86.1,629.5 89.9,618.4" />
</g>
<polygon points="29.8,618 64.6,618 60.9,629.1 32.9,629.1" fill="#000"/>
</svg>
<span class="tab" style="left:40.4px;top:2.2px;color:#fff;font-size:10.4px;font-weight:bold;transform:scaleX(0.8);">模型</span>
<span class="tab" style="left:68.3px;">03A</span>
<span class="tab" style="left:94.5px;">03B</span>
<span class="tab" style="left:120.8px;">04</span>
<span class="tab" style="left:142.3px;">05</span>
<span class="tab" style="left:163.7px; word-spacing:4px;">02 (5)</span>
<span class="tab" style="left:203.7px; word-spacing:4px;">06 (6)</span>
<div class="sep"></div>
</div>
<div id="hist"><div style="top:-0.2px">: *<b>取</b><b>消</b>*</div><div style="top:12.4px">: DAL DIMALIGNED</div></div>
<div id="hsep"></div>
<div id="cmd"><span>第一条延伸线原点或<i> </i><i>&lt;</i>选择对象<i>&gt;</i><i>:</i></span></div>
<div id="status">
<svg width="1000" height="8" viewBox="0 680 1000 8" style="position:absolute;left:0;top:-1px">
<rect x="0" y="681" width="126" height="8" fill="#f3f4f6"/>
<text x="1" y="695.5" font-family="'Liberation Sans',sans-serif" font-size="10" fill="#9aa0aa">2001.6324, 7143.2, 0.0000</text>
<g stroke="#7a7e88" stroke-width="0.8">
<rect x="127" y="682" width="14" height="8" fill="#c9cbd1"/>
<rect x="142" y="681.4" width="16" height="8" fill="#80848c"/>
<rect x="160" y="681.4" width="16" height="8" fill="#a9c8ea"/>
<rect x="177.5" y="682" width="15" height="8" fill="#c6c8ce"/>
<rect x="194" y="682" width="16" height="8" fill="#e8eef6"/>
<rect x="211.5" y="682" width="14.5" height="8" fill="#c6c8ce"/>
<rect x="227.5" y="682" width="15" height="8" fill="#c6c8ce"/>
<rect x="244.5" y="682" width="15" height="8" fill="#c9cbd1"/>
<rect x="261.5" y="682" width="15" height="8" fill="#c9cbd1"/>
<rect x="278" y="682" width="15" height="8" fill="#c9cbd1"/>
</g>
<g stroke="#fff" stroke-width="0.8"><line x1="145" y1="682" x2="145" y2="688"/><line x1="148.5" y1="682" x2="148.5" y2="688"/><line x1="152" y1="682" x2="152" y2="688"/><line x1="155.5" y1="682" x2="155.5" y2="688"/><line x1="142" y1="685.5" x2="158" y2="685.5"/></g>
<g fill="#555"><rect x="131" y="685" width="1" height="1"/><rect x="134" y="685" width="1" height="1"/><rect x="137" y="685" width="1" height="1"/><rect x="131" y="687" width="1" height="1"/><rect x="134" y="687" width="1" height="1"/><rect x="137" y="687" width="1" height="1"/></g>
<line x1="161.5" y1="682" x2="161.5" y2="688" stroke="#3a6ea8" stroke-width="1"/>
<path d="M181,688 Q183,683.5 186,685 Q189,687 190,683.5" stroke="#222" stroke-width="1.2" fill="none"/>
<rect x="198" y="684.5" width="9" height="5" fill="#fff" stroke="#4a78b8" stroke-width="1"/><circle cx="197.5" cy="684" r="1.6" fill="#f08020"/>
<path d="M215,688 L217,689 L222,684" stroke="#555" stroke-width="1" fill="none"/>
<line x1="231.3" y1="682.5" x2="231.3" y2="688" stroke="#222" stroke-width="1"/><rect x="236.5" y="684" width="3.5" height="3.5" fill="#f39a1e" transform="rotate(45 238 686)"/>
<line x1="251.5" y1="684" x2="251.5" y2="688" stroke="#333" stroke-width="1"/>
<line x1="268.5" y1="683.5" x2="268.5" y2="688" stroke="#111" stroke-width="1.6"/>
<rect x="282.5" y="685" width="6" height="4" fill="none" stroke="#111" stroke-width="1.2"/>
</svg>
</div>
<svg width="60" height="120" viewBox="0 540 60 120" style="position:absolute;left:0;top:540px;z-index:5">
<polygon points="43.7,550.8 39.7,637.4 42.4,637.8 34.5,651 29.4,638.7 33,637.7" fill="#f5333c"/>
</svg>
</body></html>
